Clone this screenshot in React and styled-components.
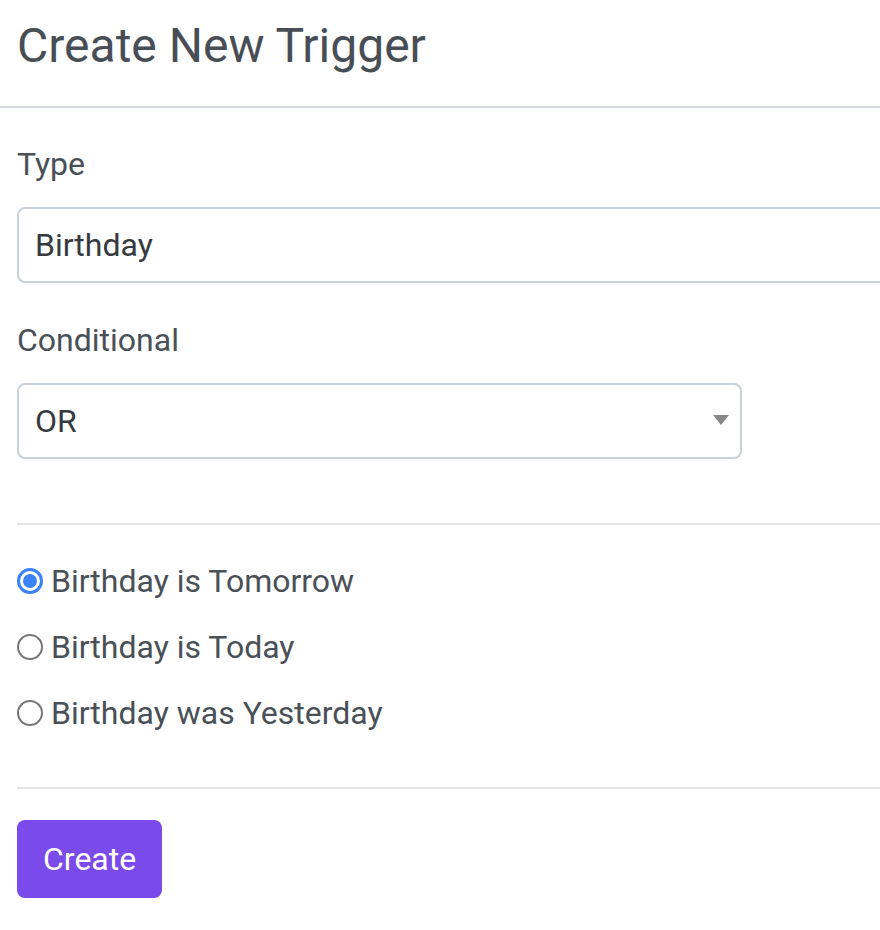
import React, { useState } from 'react';
import styled, { createGlobalStyle } from 'styled-components';

const GlobalStyle = createGlobalStyle`
  html, body {
    margin: 0;
    padding: 0;
    background: #fff;
    overflow-x: hidden;
  }
  body {
    font-family: Roboto, "Liberation Sans", Arial, sans-serif;
    color: #495057;
  }
  * { box-sizing: border-box; }
`;

const Page = styled.div`
  width: 100%;
`;

const Header = styled.header`
  padding: 17px 18px 31px 17px;
  border-bottom: 2px solid #d6dadf;
`;

const Title = styled.h1`
  margin: 0;
  font-size: 48px;
  font-weight: 400;
  line-height: 1.2;
  color: #484e56;
`;

const Form = styled.form`
  padding: 32px 0 40px 17px;
`;

const Group = styled.div`
  margin-bottom: 33px;
`;

const Label = styled.label`
  display: block;
  margin-bottom: 19px;
  font-size: 32px;
  line-height: 1.5;
  color: #495057;
`;

const TextInput = styled.input`
  display: block;
  width: calc(100% + 20px);
  height: 76px;
  padding: 0 16px;
  border: 2px solid #c9d1d9;
  border-radius: 8px;
  font-family: inherit;
  font-size: 32px;
  color: #363a3f;
  background: #fff;
  outline: none;
`;

const SelectWrap = styled.div`
  position: relative;
  width: 725px;
`;

const Select = styled.select`
  display: block;
  width: 100%;
  height: 76px;
  padding: 0 48px 0 16px;
  border: 2px solid #c9d1d9;
  border-radius: 8px;
  font-family: inherit;
  font-size: 32px;
  color: #363a3f;
  background: #fff;
  appearance: none;
  outline: none;
`;

const Caret = styled.span`
  position: absolute;
  right: 13px;
  top: 32px;
  width: 0;
  height: 0;
  border-left: 8px solid transparent;
  border-right: 8px solid transparent;
  border-top: 10px solid #888;
  pointer-events: none;
`;

const Divider = styled.hr`
  margin: ${(p) => p.$top}px 0 ${(p) => p.$bottom}px;
  border: 0;
  border-top: 2px solid #e5e5e5;
`;

const RadioList = styled.div`
  display: flex;
  flex-direction: column;
  gap: 18px;
`;

const RadioRow = styled.label`
  display: flex;
  align-items: center;
  gap: 8px;
  font-size: 32px;
  line-height: 1.5;
  color: #495057;
  cursor: pointer;
`;

const Radio = styled.input.attrs({ type: 'radio' })`
  appearance: none;
  flex: none;
  width: 26px;
  height: 26px;
  margin: 0;
  border-radius: 50%;
  border: 2px solid #767676;
  background: #fff;
  display: grid;
  place-items: center;

  &:checked {
    border: 3px solid #3b82f6;
  }
  &:checked::after {
    content: '';
    width: 14px;
    height: 14px;
    border-radius: 50%;
    background: #3b82f6;
  }
`;

const Button = styled.button`
  height: 78px;
  padding: 0 26px;
  border: 0;
  border-radius: 8px;
  background: #7a4aeb;
  color: #fff;
  font-family: inherit;
  font-size: 32px;
  cursor: pointer;
`;

const options = ['Birthday is Tomorrow', 'Birthday is Today', 'Birthday was Yesterday'];

const App = () => {
  const [when, setWhen] = useState(options[0]);

  return (
    <Page>
      <GlobalStyle />
      <Header>
        <Title>Create New Trigger</Title>
      </Header>
      <Form onSubmit={(e) => e.preventDefault()}>
        <Group>
          <Label htmlFor="type">Type</Label>
          <TextInput id="type" defaultValue="Birthday" />
        </Group>
        <Group>
          <Label htmlFor="cond">Conditional</Label>
          <SelectWrap>
            <Select id="cond" defaultValue="OR">
              <option value="OR">OR</option>
              <option value="AND">AND</option>
            </Select>
            <Caret />
          </SelectWrap>
        </Group>
        <Divider $top={64} $bottom={32} />
        <RadioList>
          {options.map((o) => (
            <RadioRow key={o}>
              <Radio name="when" checked={when === o} onChange={() => setWhen(o)} />
              {o}
            </RadioRow>
          ))}
        </RadioList>
        <Divider $top={50} $bottom={31} />
        <Button type="submit">Create</Button>
      </Form>
    </Page>
  );
};

export default App;
